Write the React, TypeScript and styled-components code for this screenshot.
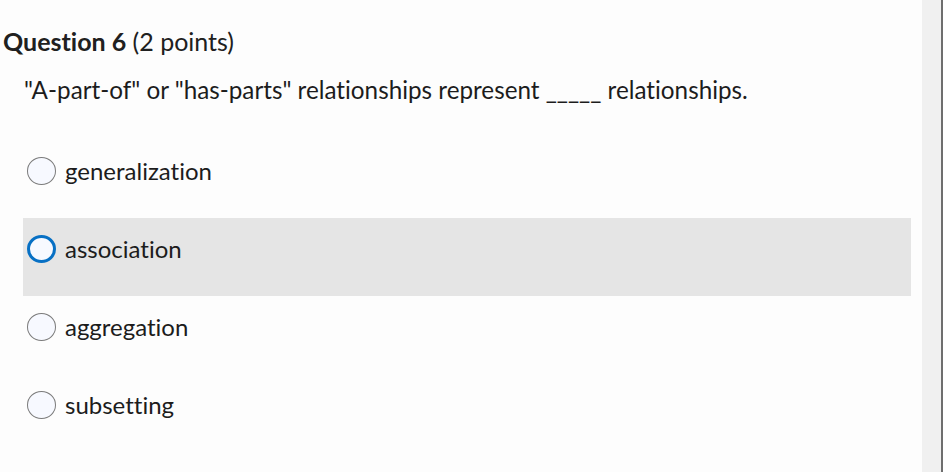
import styled, { createGlobalStyle } from "styled-components"

const Global = createGlobalStyle`
    html, body {
        margin: 0;
        padding: 0;
        background: #fdfdfd;
    }
    body {
        font-family: Lato, "Open Sans", sans-serif;
        font-variant-ligatures: none;
        color: #2d3b45;
    }
`

const Page = styled.div`
    display: flex;
    width: 943px;
    height: 472px;
    overflow: hidden;
`

const Main = styled.div`
    flex: 1;
    display: flex;
    flex-direction: column;
    padding: 0 11px 0 3px;
`

const SideBar = styled.div`
    width: 19px;
    background: #f0f0f0;
    border-right: 2px solid #6e6e6e;
`

const Title = styled.h2`
    margin: 26px 0 0 0;
    font-size: 25px;
    font-weight: 400;
    line-height: 30px;
    color: #202020;

    b {
        font-weight: 700;
    }
`

const Prompt = styled.p`
    margin: 19px 0 0 21px;
    font-size: 24.25px;
    line-height: 30px;
    color: #1c1c1c;
`

const Options = styled.div`
    display: flex;
    flex-direction: column;
    margin: 35px 0 0 20px;
`

const Option = styled.label<{ $hover?: boolean }>`
    display: flex;
    align-items: center;
    align-self: stretch;
    gap: 9px;
    height: 78px;
    box-sizing: border-box;
    padding: 16px 0 32px 4px;
    background: ${(p) => (p.$hover ? "#e5e5e5" : "transparent")};
    font-size: 24px;
    line-height: 30px;
    color: #1c1c1c;
    cursor: pointer;
`

const Radio = styled.span<{ $focus?: boolean }>`
    box-sizing: border-box;
    flex: none;
    width: 29px;
    height: 28px;
    border-radius: 50%;
    background: #f7f9ff;
    border: ${(p) => (p.$focus ? "3px solid #0770c4" : "1px solid #7b7b7b")};
`

const answers = ["generalization", "association", "aggregation", "subsetting"]

const App = () => {
  return (
    <Page>
        <Global />
        <Main>
            <Title><b>Question 6</b> (2 points)</Title>
            <Prompt>"A-part-of" or "has-parts" relationships represent _____ relationships.</Prompt>
            <Options>
                {
                    answers.map((a, i) => (
                        <Option key={a} $hover={i === 1}>
                            <Radio $focus={i === 1} />
                            {a}
                        </Option>
                    ))
                }
            </Options>
        </Main>
        <SideBar />
    </Page>
  )
}

export default App
